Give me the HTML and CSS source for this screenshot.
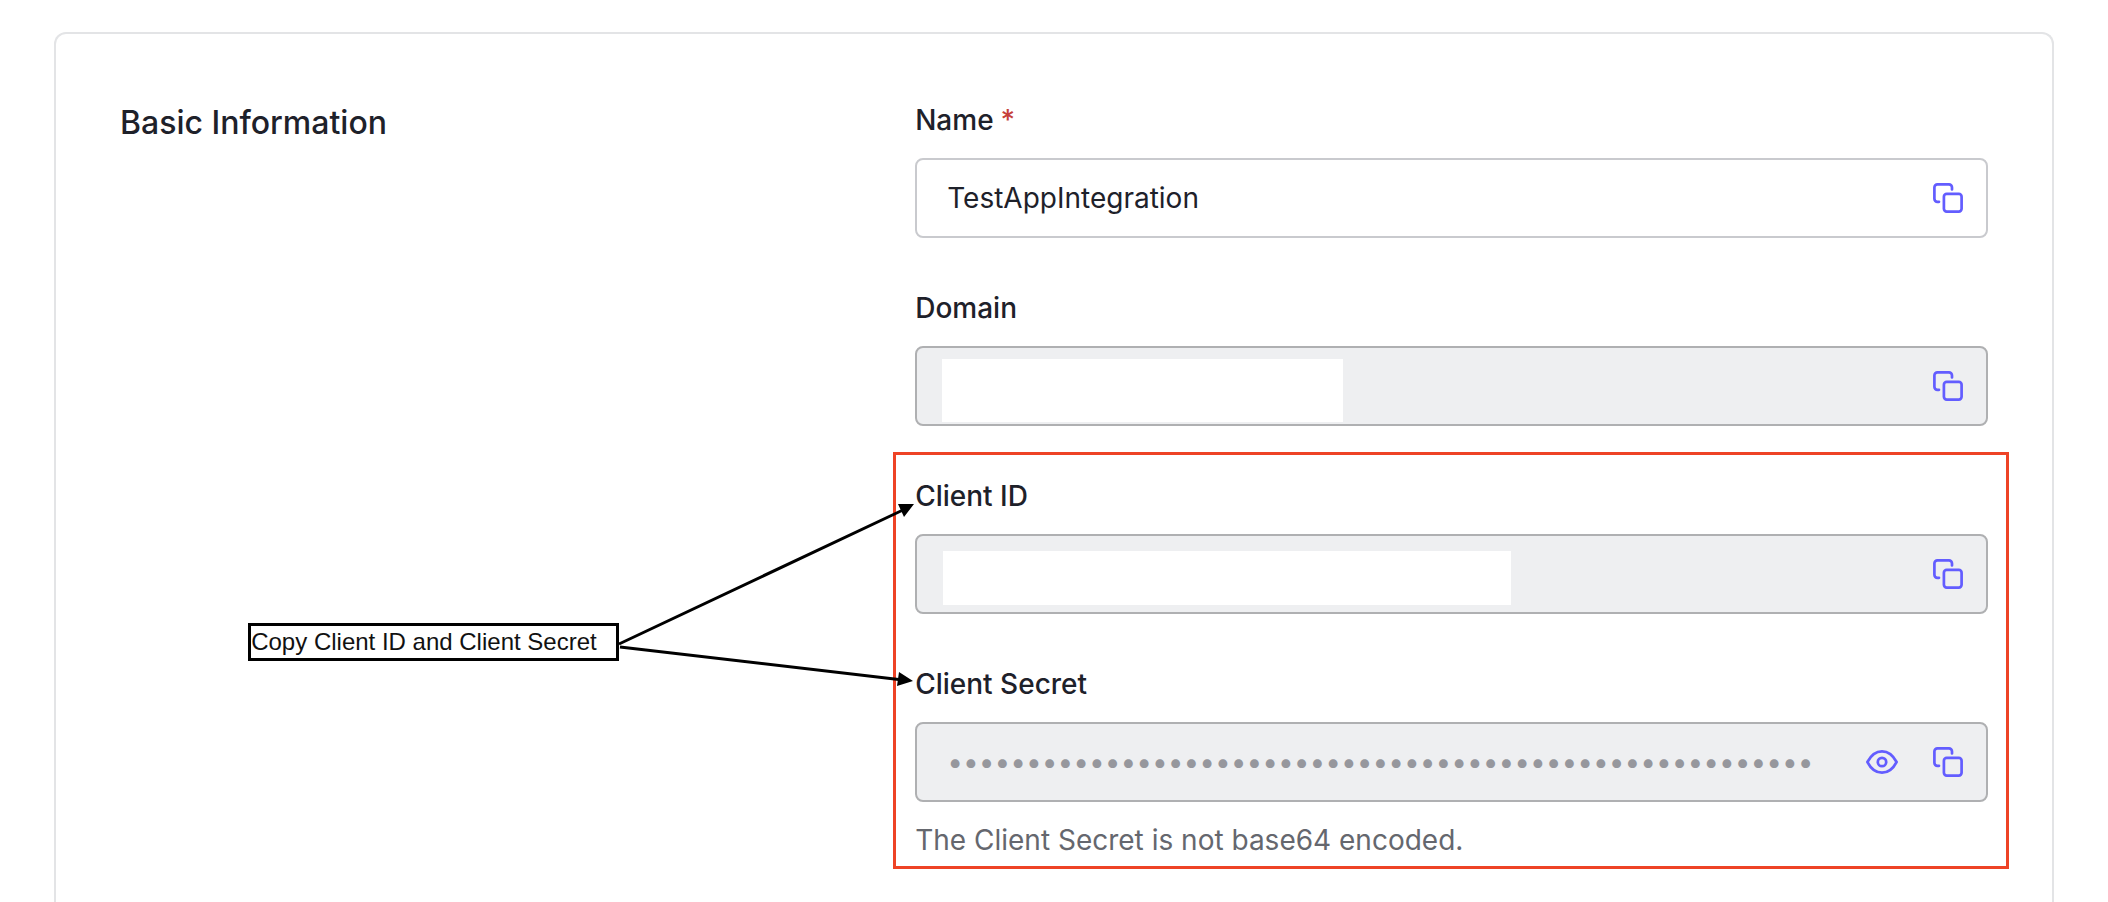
FILE: index.html
```html
<!DOCTYPE html>
<html lang="en">
<head>
<meta charset="utf-8">
<title>Application settings</title>
<link rel="stylesheet" href="styles.css">
</head>
<body>
<svg class="sprite" aria-hidden="true">
  <symbol id="copy" viewBox="0 0 32 32">
    <path d="M7 19.8H5.4a3 3 0 0 1-3-3V5.4a3 3 0 0 1 3-3H17a3 3 0 0 1 3 3V7.5"/>
    <rect x="11.9" y="11.9" width="17.7" height="17.7" rx="2.8"/>
  </symbol>
  <symbol id="eye" viewBox="0 0 32 32">
    <path d="M1.4 16C4.800 9.500 9.800 5.300 16 5.300S27.200 9.500 30.600 16C27.200 22.500 22.200 26.700 16 26.700S4.800 22.500 1.400 16Z"/>
    <circle cx="16" cy="16" r="4.2"/>
  </symbol>
</svg>
<main class="page">
  <section class="card">
    <h2 class="card-title">Basic Information</h2>
    <form class="fields">
      <div class="field">
        <label class="label" for="name">Name<span class="required">*</span></label>
        <div class="control">
          <input class="input" id="name" type="text" value="TestAppIntegration" required>
          <button class="icon-button" type="button" aria-label="Copy name"><svg class="icon"><use href="#copy"/></svg></button>
        </div>
      </div>
      <div class="field">
        <label class="label" for="domain">Domain</label>
        <div class="control control-readonly">
          <input class="input" id="domain" type="text" readonly>
          <span class="mask mask-domain"></span>
          <button class="icon-button" type="button" aria-label="Copy domain"><svg class="icon"><use href="#copy"/></svg></button>
        </div>
      </div>
      <div class="credentials">
        <div class="field">
          <label class="label" for="client-id">Client ID</label>
          <div class="control control-readonly">
            <input class="input" id="client-id" type="text" readonly>
            <span class="mask mask-client"></span>
            <button class="icon-button" type="button" aria-label="Copy client ID"><svg class="icon"><use href="#copy"/></svg></button>
          </div>
        </div>
        <div class="field">
          <label class="label" for="secret">Client Secret</label>
          <div class="control control-readonly">
            <input class="input input-secret" id="secret" type="password" value="0123456789012345678901234567890123456789012345678901234" readonly aria-describedby="secret-hint">
            <button class="icon-button" type="button" aria-label="Show client secret"><svg class="icon"><use href="#eye"/></svg></button>
            <button class="icon-button" type="button" aria-label="Copy client secret"><svg class="icon"><use href="#copy"/></svg></button>
          </div>
          <p class="hint" id="secret-hint">The Client Secret is not base64 encoded.</p>
        </div>
        <div class="highlight"></div>
        <div class="callout">Copy Client ID and Client Secret</div>
        <svg class="arrows" viewBox="0 0 300 200" aria-hidden="true">
          <path class="arrow-line" d="M4 148L288 14M5 151L288 184"/>
          <path class="arrow-head" d="M299 8L283 8L289 21ZM298 185L284 176L282 190Z"/>
        </svg>
      </div>
    </form>
  </section>
</main>
</body>
</html>
```
FILE: styles.css
```css
* { box-sizing: border-box; }

body {
  margin: 0;
  background: #fff;
  color: #1e212a;
  font-family: Inter, "Liberation Sans", sans-serif;
  font-size: 28px;
  line-height: 44px;
}

.sprite { position: absolute; width: 0; height: 0; }

.page { padding: 32px 54px 0; }

.card {
  display: grid;
  grid-template-columns: 2fr 3fr;
  column-gap: 80px;
  padding: 64px 64px 40px;
  border: 2px solid #e3e4e6;
  border-bottom: 0;
  border-radius: 12px 12px 0 0;
}

.card-title {
  margin: 0;
  font-size: 32px;
  font-weight: 500;
  line-height: 50px;
}

.fields,
.credentials {
  display: flex;
  flex-direction: column;
  gap: 48px;
}

.credentials { position: relative; }

.field {
  display: flex;
  flex-direction: column;
  gap: 16px;
}

.label { font-weight: 500; }
.required { margin-left: 7px; color: #c6403a; }

.control {
  position: relative;
  display: flex;
  align-items: center;
  gap: 18px;
  height: 80px;
  padding: 0 14px 0 30px;
  border: 2px solid #c9cace;
  border-radius: 8px;
  background: #fff;
}

.control-readonly {
  border-color: #afb0b2;
  background: #eeeff1;
}

.input {
  flex: 1;
  min-width: 0;
  height: 100%;
  padding: 0;
  border: 0;
  outline: 0;
  background: transparent;
  color: inherit;
  font: inherit;
}

.input-secret { color: #96979d; }

.icon-button {
  display: grid;
  place-items: center;
  width: 48px;
  height: 48px;
  padding: 0;
  border: 0;
  background: transparent;
  color: #635dff;
}

.icon {
  width: 32px;
  height: 32px;
  fill: none;
  stroke: currentColor;
  stroke-width: 2.7;
  stroke-linecap: round;
  stroke-linejoin: round;
}

.mask { position: absolute; background: #fff; }
.mask-domain { left: 25px; top: 11px; width: 401px; height: 63px; }
.mask-client { left: 26px; top: 15px; width: 568px; height: 54px; }

.hint { margin: 0; color: #65676e; }

.highlight {
  position: absolute;
  inset: -22px -21px -7px -22px;
  border: 3px solid #ee4326;
  pointer-events: none;
}

.callout {
  position: absolute;
  left: -667px;
  top: 149px;
  width: 371px;
  height: 38px;
  border: 3px solid #000;
  color: #111;
  font: 24px/32px "Liberation Sans", Arial, sans-serif;
  white-space: nowrap;
}

.arrows {
  position: absolute;
  left: -300px;
  top: 22px;
  width: 300px;
  height: 200px;
  pointer-events: none;
}

.arrow-line { fill: none; stroke: #000; stroke-width: 3; }
.arrow-head { fill: #000; }
```
